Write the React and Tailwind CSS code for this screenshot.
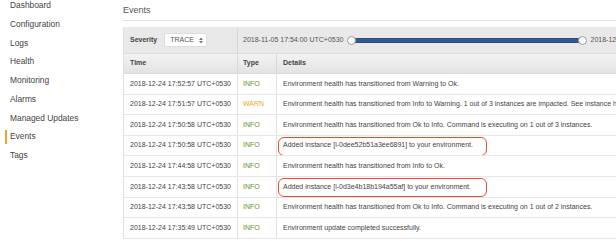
import React from "react";

const nav = ["Dashboard","Configuration","Logs","Health","Monitoring","Alarms","Managed Updates","Events","Tags"];

const rows = [
  ["2018-12-24 17:52:57 UTC+0530","INFO","Environment health has transitioned from Warning to Ok.",false],
  ["2018-12-24 17:51:57 UTC+0530","WARN","Environment health has transitioned from Info to Warning. 1 out of 3 instances are impacted. See instance health for details.",false],
  ["2018-12-24 17:50:58 UTC+0530","INFO","Environment health has transitioned from Ok to Info. Command is executing on 1 out of 3 instances.",false],
  ["2018-12-24 17:50:58 UTC+0530","INFO","Added instance [i-0dee52b51a3ee6891] to your environment.",true],
  ["2018-12-24 17:44:58 UTC+0530","INFO","Environment health has transitioned from Info to Ok.",false],
  ["2018-12-24 17:43:58 UTC+0530","INFO","Added instance [i-0d3e4b18b194a55af] to your environment.",true],
  ["2018-12-24 17:43:58 UTC+0530","INFO","Environment health has transitioned from Ok to Info. Command is executing on 1 out of 2 instances.",false],
  ["2018-12-24 17:35:49 UTC+0530","INFO","Environment update completed successfully.",false],
];

export default function App() {
  return (
    <div className="flex w-[616px] h-[241px] overflow-hidden bg-white text-[#444]" style={{fontFamily:'"Liberation Sans", Arial, sans-serif'}}>
      <div className="w-[123px] shrink-0 flex flex-col mt-[-4px]">
        {nav.map((n) => (
          <div key={n} className="h-[18.75px] flex items-center text-[8.4px] pl-[10px] relative text-[#444]">
            {n === "Events" && <div className="absolute left-[5px] top-[3px] bottom-[2px] w-[1.5px] bg-[#f7a12c]" />}
            {n}
          </div>
        ))}
      </div>
      <div className="flex-1 min-w-0 flex flex-col">
        <div className="h-[21px] flex items-center text-[9px] text-[#555] border-b border-[#e2e2e2] pt-[1px]">Events</div>
        <div className="h-[6px]" />
        <div className="border-l border-[#e0e0e0] flex flex-col">
          <div className="h-[27px] flex bg-[#e9e9e9] border-b border-[#dcdcdc]">
            <div className="w-[114px] shrink-0 flex items-center border-r border-[#d8d8d8] pl-[6px]">
              <span className="text-[7px] font-bold text-[#444]">Severity</span>
              <div className="ml-[7px] w-[43px] h-[14px] bg-white rounded-[2px] border border-[#ddd] flex items-center justify-between pl-[5px] pr-[3px]">
                <span className="text-[7px] text-[#555]">TRACE</span>
                <svg width="4" height="7" viewBox="0 0 4 7">
                  <path d="M0 3 L2 0.5 L4 3 Z" fill="#777" />
                  <path d="M0 4 L2 6.5 L4 4 Z" fill="#777" />
                </svg>
              </div>
            </div>
            <div className="flex-1 flex items-center pl-[5px] whitespace-nowrap overflow-hidden">
              <span className="text-[7px] text-[#555]">2018-11-05 17:54:00 UTC+0530</span>
              <div className="relative ml-[4px] w-[240px] shrink-0 h-[10px] flex items-center">
                <div className="absolute left-[4px] right-[4px] h-[5px] bg-[#2c5a9c] border border-[#3a4a6a] rounded-[1px]" />
                <div className="absolute left-0 w-[9px] h-[9px] rounded-full bg-white border border-[#999]" />
                <div className="absolute right-0 w-[9px] h-[9px] rounded-full bg-white border border-[#999]" />
              </div>
              <span className="ml-[3px] text-[7px] text-[#555]">2018-12-24 17:54:00 UTC+0530</span>
            </div>
          </div>
          <div className="h-[20px] grid grid-cols-[114px_39px_1fr] bg-gradient-to-b from-[#f3f3f3] to-[#e3e3e3] border-b border-[#dadada] text-[7px] font-bold text-[#444]">
            <div className="flex items-center pl-[6px] border-r border-[#d8d8d8]">Time</div>
            <div className="flex items-center pl-[5px] border-r border-[#d8d8d8]">Type</div>
            <div className="flex items-center pl-[6px]">Details</div>
          </div>
          {rows.map(([t, ty, d, hl], i) => (
            <div key={i} className="h-[20.6px] grid grid-cols-[114px_39px_1fr] border-b border-[#e6e6e6] text-[7px] whitespace-nowrap">
              <div className="flex items-center pl-[6px] border-r border-[#e0e0e0] text-[#444]">{t}</div>
              <div className={"flex items-center pl-[5px] border-r border-[#e0e0e0] " + (ty === "WARN" ? "text-[#f5a623]" : "text-[#5f9322]")}>{ty}</div>
              <div className="relative flex items-center pl-[6px] text-[#444] overflow-hidden">
                {d}
                {hl && <div className="absolute left-[1px] top-[1px] w-[209px] h-[19px] rounded-[6px] border-[1.5px] border-[#ea4a2c]" />}
              </div>
            </div>
          ))}
        </div>
      </div>
    </div>
  );
}
